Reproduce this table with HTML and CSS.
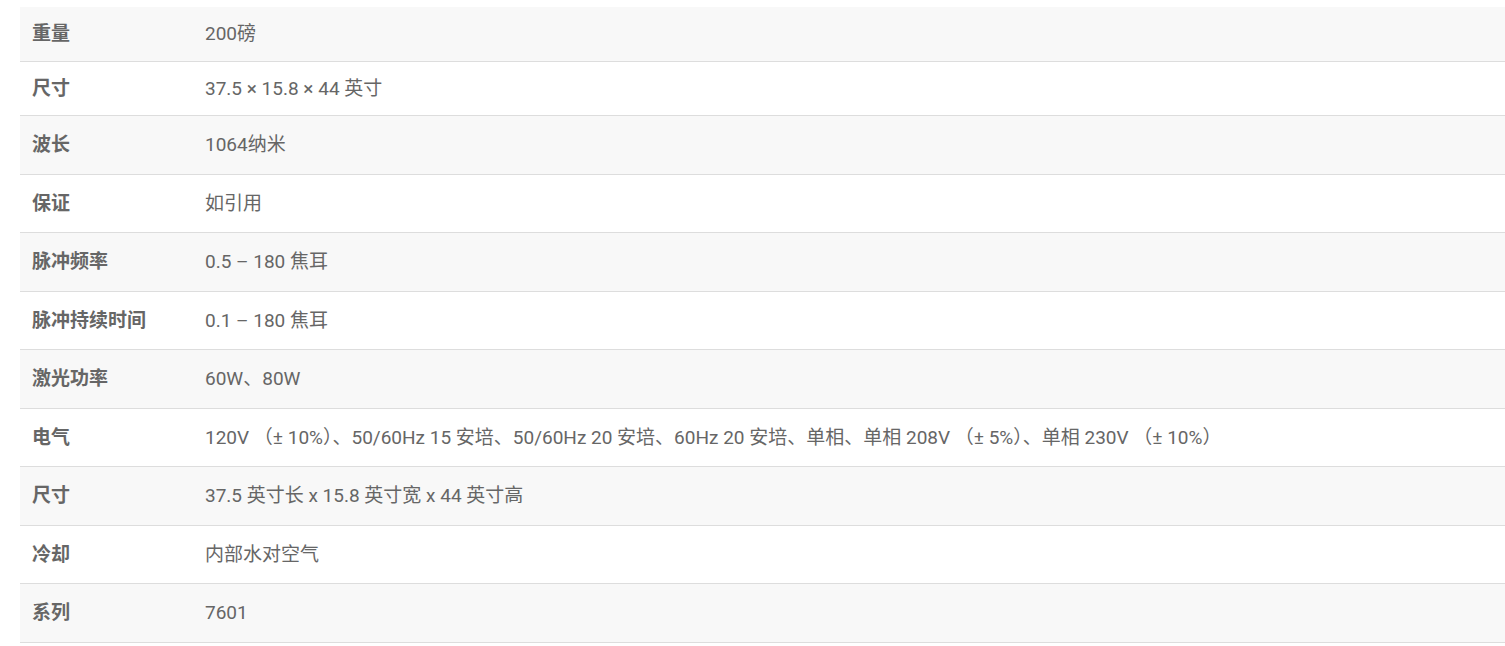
FILE: index.html
```html
<!DOCTYPE html>
<html lang="zh-CN">
<head>
<meta charset="utf-8">
<title>规格</title>
<link rel="stylesheet" href="styles.css">
</head>
<body>
<table class="specs">
  <colgroup><col class="col-label"><col></colgroup>
  <tbody>
    <tr class="compact"><th>重量</th><td>200磅</td></tr>
    <tr class="compact"><th>尺寸</th><td>37.5 × 15.8 × 44 英寸</td></tr>
    <tr><th>波长</th><td>1064纳米</td></tr>
    <tr><th>保证</th><td>如引用</td></tr>
    <tr><th>脉冲频率</th><td>0.5 – 180 焦耳</td></tr>
    <tr><th>脉冲持续时间</th><td>0.1 – 180 焦耳</td></tr>
    <tr><th>激光功率</th><td>60W、80W</td></tr>
    <tr><th>电气</th><td>120V （± 10%）、50/60Hz 15 安培、50/60Hz 20 安培、60Hz 20 安培、单相、单相 208V （± 5%）、单相 230V （± 10%）</td></tr>
    <tr><th>尺寸</th><td>37.5 英寸长 x 15.8 英寸宽 x 44 英寸高</td></tr>
    <tr><th>冷却</th><td>内部水对空气</td></tr>
    <tr><th>系列</th><td>7601</td></tr>
  </tbody>
</table>
</body>
</html>
```
FILE: styles.css
```css
html, body {
  margin: 0;
  padding: 0;
  background: #fff;
  overflow: hidden;
}
body {
  font-family: Roboto, "Noto Sans CJK SC", sans-serif;
  font-size: 19px;
  color: #666;
}
.specs {
  margin: 7px 0 0 20px;
  width: 1485px;
  border-collapse: collapse;
  table-layout: fixed;
}
.col-label {
  width: 173px;
}
.specs th,
.specs td {
  padding: 15px 12px;
  line-height: 27.5px;
  text-align: left;
  vertical-align: top;
  border-bottom: 1px solid #ddd;
}
.specs th {
  font-weight: 700;
  color: #666;
}
.specs tr.compact th,
.specs tr.compact td {
  padding-top: 13px;
  padding-bottom: 13px;
}
.specs tbody tr:nth-child(odd) {
  background: #f8f8f8;
}
```
